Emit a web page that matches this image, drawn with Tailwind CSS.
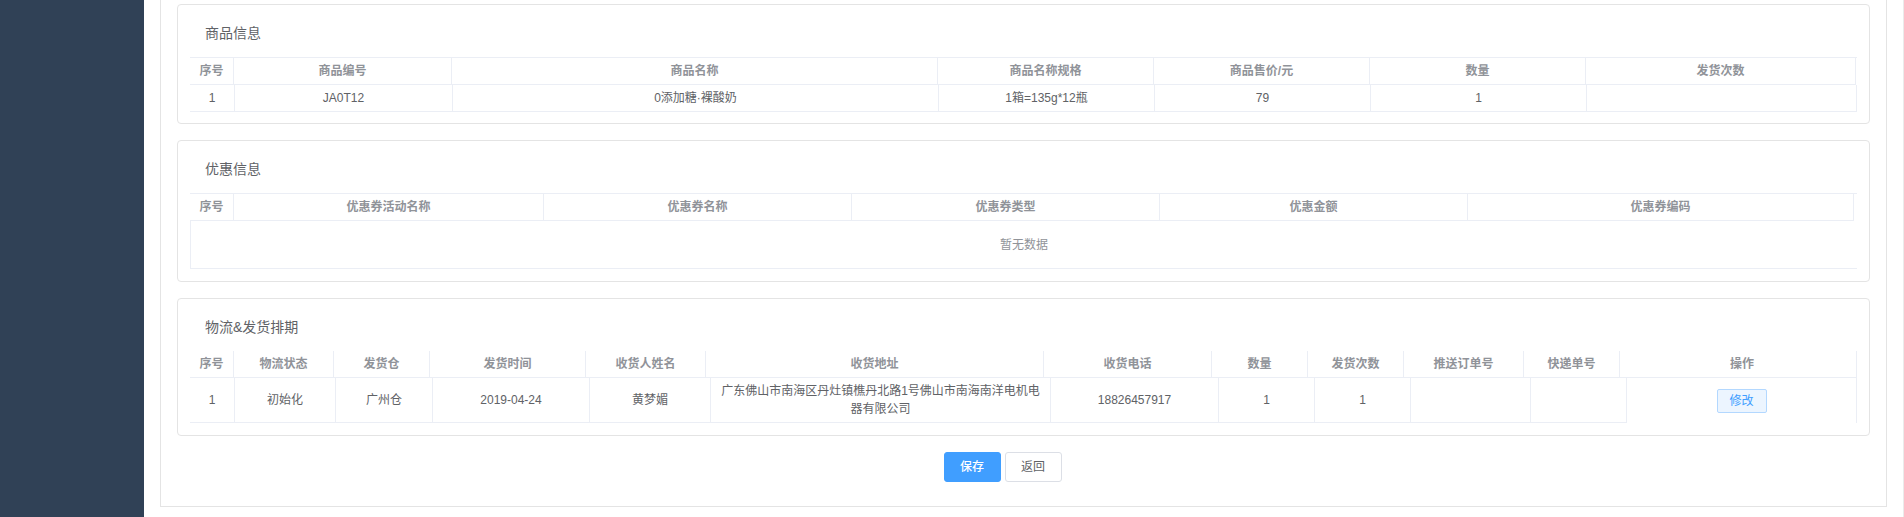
<!DOCTYPE html>
<html lang="zh-CN">
<head>
<meta charset="utf-8">
<title>订单详情</title>
<meta name="viewport" content="width=device-width, initial-scale=1">
<script src="https://cdn.jsdelivr.net/npm/@tailwindcss/browser@4"></script>
</head>
<body class="flex min-h-screen bg-white font-['Liberation_Sans','Noto_Sans_CJK_SC',sans-serif] text-xs text-[#606266]">
<aside class="w-36 shrink-0 bg-[#304156]"></aside>
<main class="min-w-0 flex-1 border-r border-[#ebebeb] px-4 pb-2">
  <div class="flex flex-col gap-4 border-x border-b border-[#e4e4e4] px-4 pt-1 pb-6">

    <section class="rounded border border-[#e4e4e4] px-3 pb-[11px]">
      <h2 class="px-[15px] pt-[18px] pb-[14px] text-sm leading-5">商品信息</h2>
      <table class="block border-separate border-spacing-0 border-t border-[#ebeef5] text-center leading-[18px] [&_td]:border-r [&_td]:border-b [&_td]:border-[#ebeef5] [&_td]:px-2 [&_td]:py-1 [&_th]:border-r [&_th]:border-b [&_th]:border-[#ebeef5] [&_th]:py-1">
        <thead class="table w-[calc(100%-1px)] table-fixed text-[#909399]">
          <tr>
            <th class="w-[44px]">序号</th>
            <th class="w-[218px]">商品编号</th>
            <th class="w-[486px]">商品名称</th>
            <th class="w-[216px]">商品名称规格</th>
            <th class="w-[216px]">商品售价/元</th>
            <th class="w-[216px]">数量</th>
            <th>发货次数</th>
          </tr>
        </thead>
        <tbody class="table w-full table-fixed">
          <tr>
            <td class="w-[45px]">1</td>
            <td class="w-[218px]">JA0T12</td>
            <td class="w-[486px]">0添加糖·裸酸奶</td>
            <td class="w-[216px]">1箱=135g*12瓶</td>
            <td class="w-[216px]">79</td>
            <td class="w-[216px]">1</td>
            <td></td>
          </tr>
        </tbody>
      </table>
    </section>

    <section class="rounded border border-[#e4e4e4] px-3 pb-3">
      <h2 class="px-[15px] pt-[18px] pb-[14px] text-sm leading-5">优惠信息</h2>
      <table class="block border-separate border-spacing-0 border-t border-[#ebeef5] text-center leading-[18px] [&_th]:border-r [&_th]:border-b [&_th]:border-[#ebeef5] [&_th]:py-1">
        <thead class="table w-[calc(100%-3px)] table-fixed text-[#909399]">
          <tr>
            <th class="w-[44px]">序号</th>
            <th class="w-[310px]">优惠券活动名称</th>
            <th class="w-[308px]">优惠券名称</th>
            <th class="w-[308px]">优惠券类型</th>
            <th class="w-[308px]">优惠金额</th>
            <th>优惠券编码</th>
          </tr>
        </thead>
        <tbody class="table w-full table-fixed text-[#909399]">
          <tr>
            <td colspan="6" class="h-12 border-b border-l border-[#ebeef5]">暂无数据</td>
          </tr>
        </tbody>
      </table>
    </section>

    <section class="rounded border border-[#e4e4e4] px-3 pb-3">
      <h2 class="px-[15px] pt-[18px] pb-[14px] text-sm leading-5">物流&amp;发货排期</h2>
      <table class="block border-separate border-spacing-0 text-center leading-[18px] [&_td]:border-r [&_td]:border-[#ebeef5] [&_td]:px-2 [&_td]:py-1 [&_th]:border-r [&_th]:border-b [&_th]:border-[#ebeef5] [&_th]:py-1">
        <thead class="table w-full table-fixed text-[#909399]">
          <tr>
            <th class="w-[44px]">序号</th>
            <th class="w-[100px]">物流状态</th>
            <th class="w-[96px]">发货仓</th>
            <th class="w-[156px]">发货时间</th>
            <th class="w-[120px]">收货人姓名</th>
            <th class="w-[338px]">收货地址</th>
            <th class="w-[168px]">收货电话</th>
            <th class="w-[96px]">数量</th>
            <th class="w-[96px]">发货次数</th>
            <th class="w-[120px]">推送订单号</th>
            <th class="w-[96px]">快递单号</th>
            <th class="pl-2">操作</th>
          </tr>
        </thead>
        <tbody class="table w-full table-fixed">
          <tr>
            <td class="w-[45px] border-b">1</td>
            <td class="w-[101px] border-b">初始化</td>
            <td class="w-[97px] border-b">广州仓</td>
            <td class="w-[157px] border-b">2019-04-24</td>
            <td class="w-[121px] border-b">黄梦媚</td>
            <td class="w-[340px] border-b">广东佛山市南海区丹灶镇樵丹北路1号佛山市南海南洋电机电器有限公司</td>
            <td class="w-[168px] border-b">18826457917</td>
            <td class="w-[96px] border-b">1</td>
            <td class="w-[96px] border-b">1</td>
            <td class="w-[120px] border-b"></td>
            <td class="w-[96px] border-b"></td>
            <td><button type="button" class="inline-flex h-6 w-[50px] items-center justify-center rounded-xs border border-[#b3d8ff] bg-[#ecf5ff] align-middle text-[#409eff]">修改</button></td>
          </tr>
        </tbody>
      </table>
    </section>

    <div class="flex justify-center gap-1 pr-[42px]">
      <button type="button" class="h-[30px] w-[57px] rounded-[3px] border border-[#409eff] bg-[#409eff] font-medium text-white">保存</button>
      <button type="button" class="h-[30px] w-[57px] rounded-[3px] border border-[#dcdfe6] bg-white">返回</button>
    </div>
  </div>
</main>
</body>
</html>
